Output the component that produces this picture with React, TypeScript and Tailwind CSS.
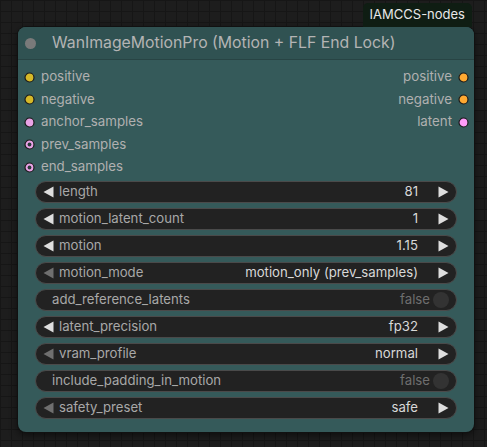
import React from 'react'

type Slot = { name: string; color: string; hollow?: boolean }

const inputs: Slot[] = [
  { name: 'positive', color: '#d6b928', hollow: false },
  { name: 'negative', color: '#d6b928', hollow: false },
  { name: 'anchor_samples', color: '#e9a3e6' },
  { name: 'prev_samples', color: '#e9a3e6', hollow: true },
  { name: 'end_samples', color: '#e9a3e6', hollow: true },
]

const outputs: Slot[] = [
  { name: 'positive', color: '#ffa931' },
  { name: 'negative', color: '#ffa931' },
  { name: 'latent', color: '#ff9cf9' },
]

type Widget =
  | { kind: 'num'; label: string; value: string; leftDim?: boolean }
  | { kind: 'toggle'; label: string; value: string }

const widgets: Widget[] = [
  { kind: 'num', label: 'length', value: '81' },
  { kind: 'num', label: 'motion_latent_count', value: '1' },
  { kind: 'num', label: 'motion', value: '1.15' },
  { kind: 'num', label: 'motion_mode', value: 'motion_only (prev_samples)', leftDim: true },
  { kind: 'toggle', label: 'add_reference_latents', value: 'false' },
  { kind: 'num', label: 'latent_precision', value: 'fp32' },
  { kind: 'num', label: 'vram_profile', value: 'normal', leftDim: true },
  { kind: 'toggle', label: 'include_padding_in_motion', value: 'false' },
  { kind: 'num', label: 'safety_preset', value: 'safe', leftDim: true },
]

function Dot({ color, hollow }: { color: string; hollow?: boolean }) {
  return (
    <svg width="11" height="11" viewBox="0 0 11 11" className="shrink-0">
      <circle cx="5.5" cy="5.5" r="4.5" fill={color} stroke="#1b1b1b" strokeWidth="1.2" />
      {hollow && <circle cx="5.5" cy="5.5" r="1.9" fill="#2b3b3b" />}
    </svg>
  )
}

function Arrow({ dir, dim }: { dir: 'l' | 'r'; dim?: boolean }) {
  return (
    <svg width="11" height="12" viewBox="0 0 11 12" className="shrink-0">
      <polygon
        points={dir === 'l' ? '10.5,0.5 10.5,11.5 0.5,6' : '0.5,0.5 0.5,11.5 10.5,6'}
        fill={dim ? '#6f6f6f' : '#dedede'}
      />
    </svg>
  )
}

function WidgetRow({ w }: { w: Widget }) {
  if (w.kind === 'toggle') {
    return (
      <div className="h-[22px] rounded-full bg-[#222222] border border-[#4a4a4a] flex items-center pl-[16px] pr-[7px]">
        <span className="text-[#a8a8a8]">{w.label}</span>
        <span className="ml-auto text-[#6e6e6e] mr-[3px]">{w.value}</span>
        <span className="w-[16px] h-[16px] rounded-full bg-[#333333]" />
      </div>
    )
  }
  return (
    <div className="h-[22px] rounded-full bg-[#222222] border border-[#4a4a4a] flex items-center pl-[7px] pr-[7px]">
      <Arrow dir="l" dim={w.leftDim} />
      <span className="ml-[5px] text-[#a8a8a8]">{w.label}</span>
      <span className="ml-auto text-[#d8d8d8] mr-[20px]">{w.value}</span>
      <Arrow dir="r" />
    </div>
  )
}

export default function App() {
  return (
    <div
      className="w-[487px] h-[447px] overflow-hidden bg-[#1d1d1d] bg-[linear-gradient(to_right,#161616_1px,transparent_1px),linear-gradient(to_bottom,#161616_1px,transparent_1px)] bg-[size:11px_11px] pt-[3px] pl-[18px]"
      style={{ fontFamily: 'Inter, "Noto Sans", sans-serif' }}
    >
      <div className="w-[456px] flex justify-end pr-[2px]">
        <div className="h-[24px] px-[7px] rounded-t-[5px] bg-[#0f1d13] text-[#e8e8e8] text-[13px] flex items-center">
          IAMCCS-nodes
        </div>
      </div>
      <div className="w-[456px] rounded-[8px] bg-[#355a5a] shadow-[0_0_0_1px_#111,0_3px_8px_rgba(0,0,0,0.6)] overflow-hidden">
        <div className="h-[33px] bg-[#305252] border-b border-[#284444] flex items-center pl-[7px]">
          <span className="w-[11px] h-[11px] rounded-full bg-[#7a7a7a]" />
          <span className="ml-[16px] text-[15.8px] text-[#b4b4b4]">
            WanImageMotionPro (Motion + FLF End Lock)
          </span>
        </div>
        <div className="flex pt-[6px] text-[13.3px]">
          <div className="flex-1 flex flex-col pl-[6px]">
            {inputs.map(s => (
              <div key={s.name} className="h-[22.5px] flex items-center gap-[6px]">
                <Dot color={s.color} hollow={s.hollow} />
                <span className="text-[#b0b0b0]">{s.name}</span>
              </div>
            ))}
          </div>
          <div className="flex flex-col items-end pr-[5px]">
            {outputs.map(s => (
              <div key={s.name} className="h-[22.5px] flex items-center gap-[6px]">
                <span className="text-[#b0b0b0]">{s.name}</span>
                <Dot color={s.color} />
              </div>
            ))}
          </div>
        </div>
        <div className="flex flex-col gap-[5px] px-[17px] pt-[2px] pb-[13px] text-[13.2px]">
          {widgets.map(w => (
            <WidgetRow key={w.label} w={w} />
          ))}
        </div>
      </div>
    </div>
  )
}
